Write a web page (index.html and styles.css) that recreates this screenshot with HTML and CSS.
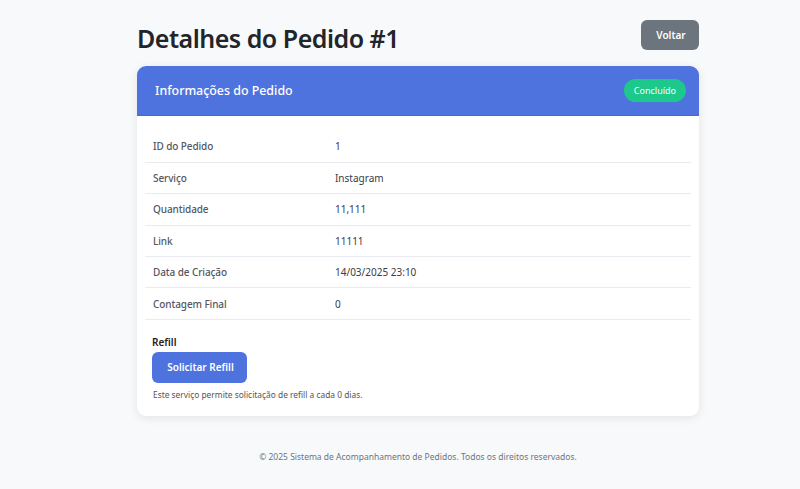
FILE: index.html
```html
<!DOCTYPE html>
<html lang="pt-BR">
<head>
<meta charset="utf-8">
<title>Detalhes do Pedido #1</title>
<link rel="stylesheet" href="styles.css">
</head>
<body>
<div class="container">
  <div class="page-head">
    <h1 class="title">Detalhes do Pedido #1</h1>
    <a class="btn btn-back" href="#">Voltar</a>
  </div>
  <div class="card">
    <div class="card-header">
      <h2 class="card-title">Informações do Pedido</h2>
      <span class="badge">Concluído</span>
    </div>
    <div class="card-body">
      <table class="info">
        <tr><th>ID do Pedido</th><td>1</td></tr>
        <tr><th>Serviço</th><td>Instagram</td></tr>
        <tr><th>Quantidade</th><td>11,111</td></tr>
        <tr><th>Link</th><td>11111</td></tr>
        <tr><th>Data de Criação</th><td>14/03/2025 23:10</td></tr>
        <tr><th>Contagem Final</th><td>0</td></tr>
      </table>
      <div class="refill">
        <div class="refill-label">Refill</div>
        <a class="btn btn-primary" href="#">Solicitar Refill</a>
        <p class="refill-note">Este serviço permite solicitação de refill a cada 0 dias.</p>
      </div>
    </div>
  </div>
  <footer class="footer">© 2025 Sistema de Acompanhamento de Pedidos. Todos os direitos reservados.</footer>
</div>
</body>
</html>
```
FILE: styles.css
```css
* { box-sizing: border-box; }
html, body { margin: 0; padding: 0; }
body {
  background: #f8f9fb;
  font-family: "Noto Sans", "Open Sans", sans-serif;
  color: #333;
}
.container {
  width: 562px;
  margin-left: 137px;
  padding-top: 20px;
}
.page-head {
  display: flex;
  justify-content: space-between;
  align-items: flex-start;
  height: 46px;
}
.title {
  margin: 0;
  font-size: 25px;
  font-weight: 600;
  letter-spacing: -0.5px;
  line-height: 34px;
  color: #222529;
  padding-top: 1px;
}
.btn {
  display: inline-flex;
  align-items: center;
  justify-content: center;
  text-decoration: none;
  color: #fff;
  font-weight: 600;
  font-size: 10px;
  border-radius: 6px;
}
.btn-back {
  width: 58px;
  height: 30px;
  background: #6c757d;
  padding-left: 2px;
}
.card {
  background: #fff;
  border-radius: 9px;
  box-shadow: 0 2px 10px rgba(0,0,0,0.09);
  overflow: hidden;
}
.card-header {
  background: #4e73df;
  height: 50px;
  display: flex;
  align-items: center;
  justify-content: space-between;
  padding: 0 13px 0 18px;
  border-bottom: 1px solid #4569d4;
}
.card-title {
  margin: 0;
  color: #fff;
  font-size: 12.4px;
  font-weight: 500;
}
.badge {
  background: #1cc88a;
  color: #fff;
  font-size: 9px;
  height: 23px;
  padding: 0 10px;
  border-radius: 12px;
  display: inline-flex;
  align-items: center;
}
.card-body {
  padding: 15px 8px 16px;
}
.info {
  width: 100%;
  border-collapse: collapse;
  font-size: 10px;
}
.info th, .info td {
  text-align: left;
  height: 31.4px;
  padding: 0 8px;
  border-bottom: 1px solid #e9ebf0;
  vertical-align: middle;
}
.info th {
  width: 33.33%;
  font-weight: 500;
  font-size: 10px;
  letter-spacing: -0.1px;
  color: #55575f;
}
.info td {
  color: #3a3b45;
}
.refill {
  padding: 16px 7px 0;
}
.refill-label {
  font-size: 10px;
  font-weight: 600;
  color: #222;
  line-height: 13px;
  margin-bottom: 3px;
}
.btn-primary {
  width: 95px;
  height: 31px;
  background: #4e73df;
  padding-left: 2px;
}
.refill-note {
  margin: 6px 0 0 1px;
  font-size: 8.4px;
  color: #555;
}
.footer {
  text-align: center;
  font-size: 8.5px;
  color: #6c757d;
  margin-top: 35px;
}
```
